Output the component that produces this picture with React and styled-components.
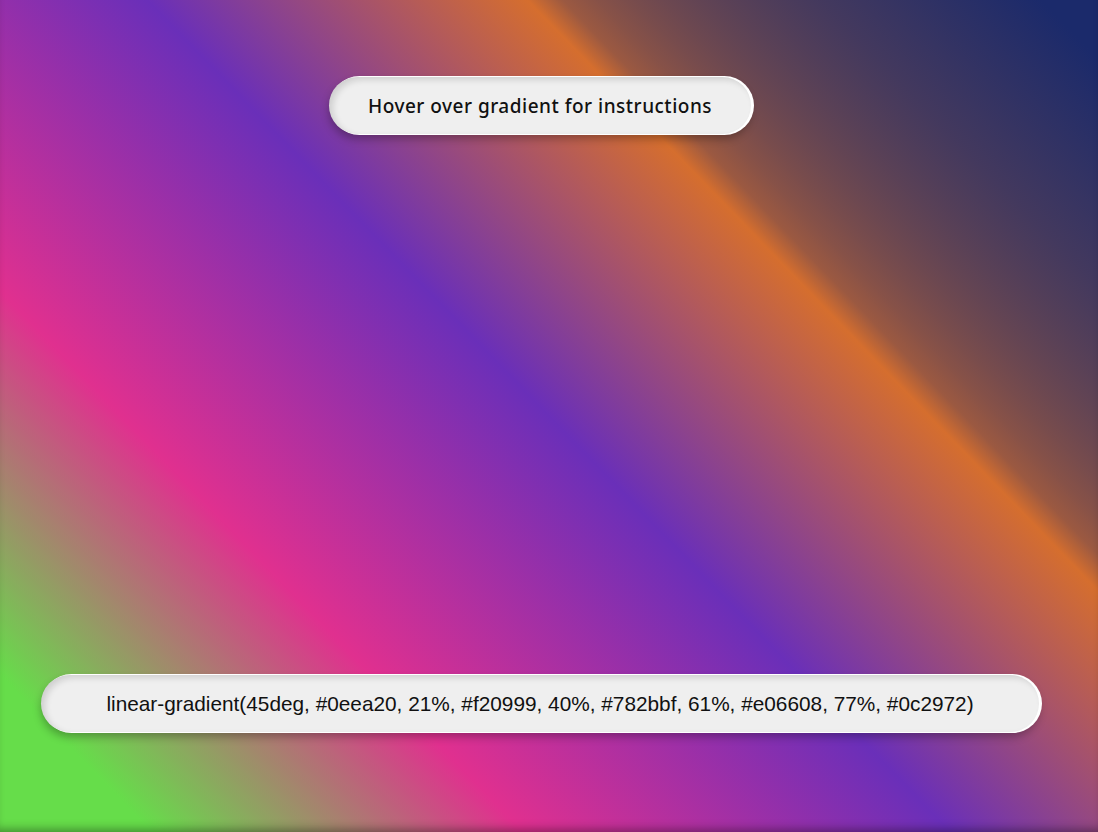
import React from "react";
import styled, { createGlobalStyle } from "styled-components";

const GlobalStyle = createGlobalStyle`
    html, body {
        margin: 0;
        padding: 0;
    }
    body {
        font-family: "Liberation Sans", Arial, sans-serif;
    }
`;

// colours are the ones seen on screen, the css string below is what the page shows
const Page = styled.div`
    width: 100vw;
    height: 100vh;
    box-sizing: border-box;
    padding: 77px 18px 100px 0;
    display: flex;
    flex-direction: column;
    align-items: center;
    background: linear-gradient(
        46deg,
        #66dd4a 0%,
        #66dd4a 8%,
        #e0308f 27.5%,
        #6a2fb9 50%,
        #d56e2e 70%,
        75.5%,
        #1b2a6b 97%
    );
    box-shadow: inset 0 -8px 10px -5px rgba(0, 0, 0, 0.35);
    overflow: hidden;
`;

const Pill = styled.div`
    width: ${(p) => p.$width}px;
    height: 57px;
    box-sizing: border-box;
    border-radius: 29px;
    background: #efefef;
    display: flex;
    align-items: center;
    justify-content: center;
    color: #111;
    font-family: ${(p) => p.$font};
    font-size: ${(p) => p.$size}px;
    font-weight: ${(p) => p.$weight || 400};
    letter-spacing: ${(p) => p.$spacing || "0"};
    white-space: nowrap;
    box-shadow:
        inset 4px 3px 6px rgba(0, 0, 0, 0.13),
        2px 0 0 1px #fff,
        0 5px 9px rgba(0, 0, 0, 0.28);
    user-select: none;
`;

const Spacer = styled.div`
    flex: 1;
`;

const gradientText =
    "linear-gradient(45deg, #0eea20, 21%, #f20999, 40%, #782bbf, 61%, #e06608, 77%, #0c2972)";

export default function App() {
    return (
        <>
            <GlobalStyle />
            <Page>
                <Pill
                    $width={422}
                    $size={19}
                    $font={'"Noto Sans", "Open Sans", sans-serif'}
                    $weight={500}
                    $spacing="0.5px"
                >
                    Hover over gradient for instructions
                </Pill>
                <Spacer />
                <Pill
                    $width={998}
                    $size={20.8}
                    $font={'"Liberation Sans", Arial, sans-serif'}
                >
                    {gradientText}
                </Pill>
            </Page>
        </>
    );
}
